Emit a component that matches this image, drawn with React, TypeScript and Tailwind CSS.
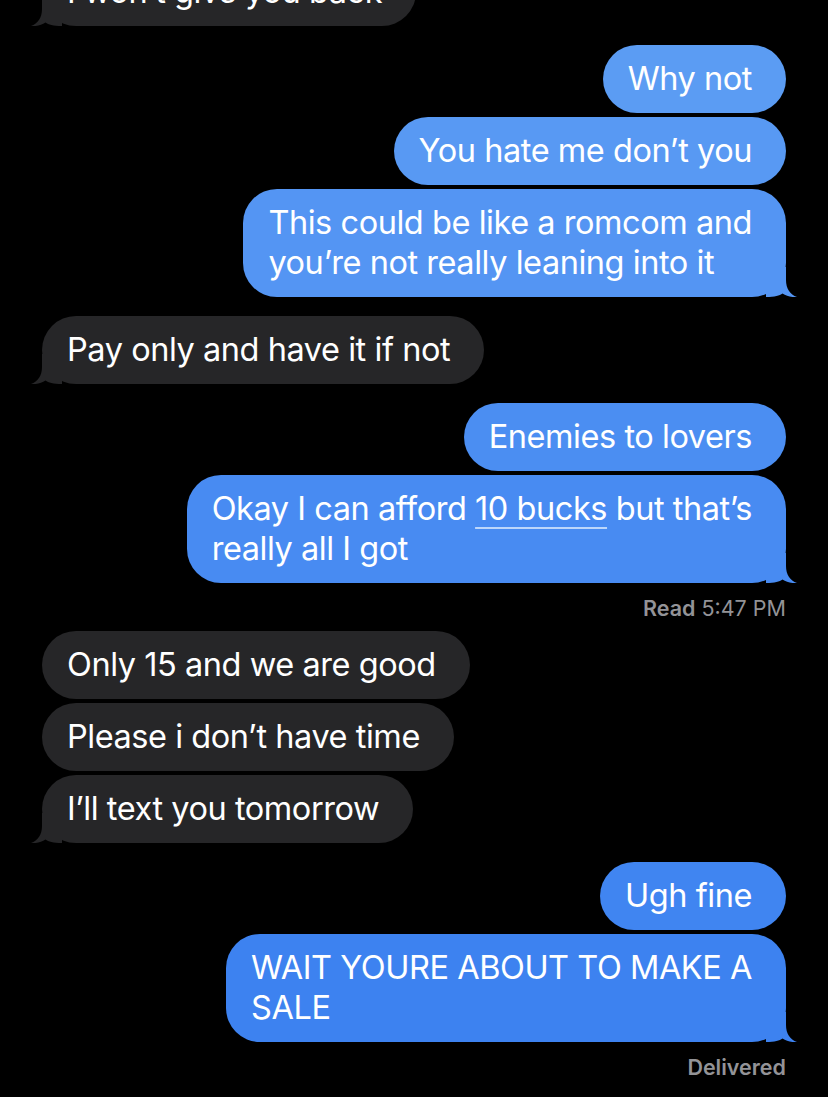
import React from 'react';

type Side = 'me' | 'them';

interface Message {
  side: Side;
  text: React.ReactNode;
  tail?: boolean;
  bg: string;
  tint: string;
}

interface Group {
  side: Side;
  messages: Message[];
  receipt?: React.ReactNode;
}

const GRAY = { bg: 'bg-[#262628]', tint: 'text-[#262628]' };

const groups: Group[] = [
  {
    side: 'me',
    messages: [
      { side: 'me', text: 'Why not', bg: 'bg-[#5b9cf3]', tint: 'text-[#5b9cf3]' },
      { side: 'me', text: 'You hate me don’t you', bg: 'bg-[#5899f3]', tint: 'text-[#5899f3]' },
      {
        side: 'me',
        text: (
          <>
            This could be like a romcom and
            <br />
            you’re not really leaning into it
          </>
        ),
        tail: true,
        bg: 'bg-[#5495f3]',
        tint: 'text-[#5495f3]',
      },
    ],
  },
  {
    side: 'them',
    messages: [{ side: 'them', text: 'Pay only and have it if not', tail: true, ...GRAY }],
  },
  {
    side: 'me',
    messages: [
      { side: 'me', text: 'Enemies to lovers', bg: 'bg-[#4b8ef2]', tint: 'text-[#4b8ef2]' },
      {
        side: 'me',
        text: (
          <>
            Okay I can afford{' '}
            <span className="underline decoration-[#bcd6fb] decoration-[1.5px] underline-offset-[7px]">10 bucks</span> but
            that’s
            <br />
            really all I got
          </>
        ),
        tail: true,
        bg: 'bg-[#488bf2]',
        tint: 'text-[#488bf2]',
      },
    ],
    receipt: (
      <>
        <span className="font-semibold">Read</span> 5:47 PM
      </>
    ),
  },
  {
    side: 'them',
    messages: [
      { side: 'them', text: 'Only 15 and we are good', ...GRAY },
      { side: 'them', text: 'Please i don’t have time', ...GRAY },
      { side: 'them', text: 'I’ll text you tomorrow', tail: true, ...GRAY },
    ],
  },
  {
    side: 'me',
    messages: [
      { side: 'me', text: 'Ugh fine', bg: 'bg-[#4085f1]', tint: 'text-[#4085f1]' },
      {
        side: 'me',
        text: (
          <>
            WAIT YOURE ABOUT TO MAKE A
            <br />
            SALE
          </>
        ),
        tail: true,
        bg: 'bg-[#3d82f0]',
        tint: 'text-[#3d82f0]',
      },
    ],
    receipt: <span className="font-semibold">Delivered</span>,
  },
];

function Tail({ side, tint }: { side: Side; tint: string }) {
  return (
    <svg
      className={`absolute bottom-0 ${side === 'me' ? '-right-[11px]' : '-left-[11px] -scale-x-100'} ${tint}`}
      width="31"
      height="30"
      viewBox="0 0 31 30"
    >
      <path
        d="M0 0H20V13C20 21.5 24 27.5 31 30C25.5 30.6 20.5 29 16.5 26.5C13.5 28.8 9 30 0 30Z"
        fill="currentColor"
      />
    </svg>
  );
}

function Bubble({ msg, className = '' }: { msg: Message; className?: string }) {
  return (
    <div
      className={`relative whitespace-nowrap rounded-[34px] py-[14px] pl-[25px] pr-[34px] text-[32.5px] leading-[40px] tracking-[-0.45px] text-white ${msg.bg} ${className}`}
    >
      {msg.text}
      {msg.tail && <Tail side={msg.side} tint={msg.tint} />}
    </div>
  );
}

export default function App() {
  return (
    <div className="h-[1097px] w-full overflow-hidden bg-black font-['Inter','Liberation_Sans',sans-serif]">
      <div className="flex flex-col gap-[19px] px-[42px]">
        {/* cut off at the top of the capture */}
        <div className="flex justify-start">
          <Bubble
            className="-mt-[42px]"
            msg={{ side: 'them', text: 'I won’t give you back', tail: true, ...GRAY }}
          />
        </div>

        {groups.map((g, gi) => (
          <div key={gi} className={`flex flex-col gap-[4px] ${g.side === 'me' ? 'items-end' : 'items-start'}`}>
            {g.messages.map((m, mi) => (
              <Bubble key={mi} msg={m} />
            ))}
            {g.receipt && (
              <div className="-mb-[9px] pt-[8px] text-[21.5px] leading-[26px] text-[#939397]">{g.receipt}</div>
            )}
          </div>
        ))}
      </div>
    </div>
  );
}
